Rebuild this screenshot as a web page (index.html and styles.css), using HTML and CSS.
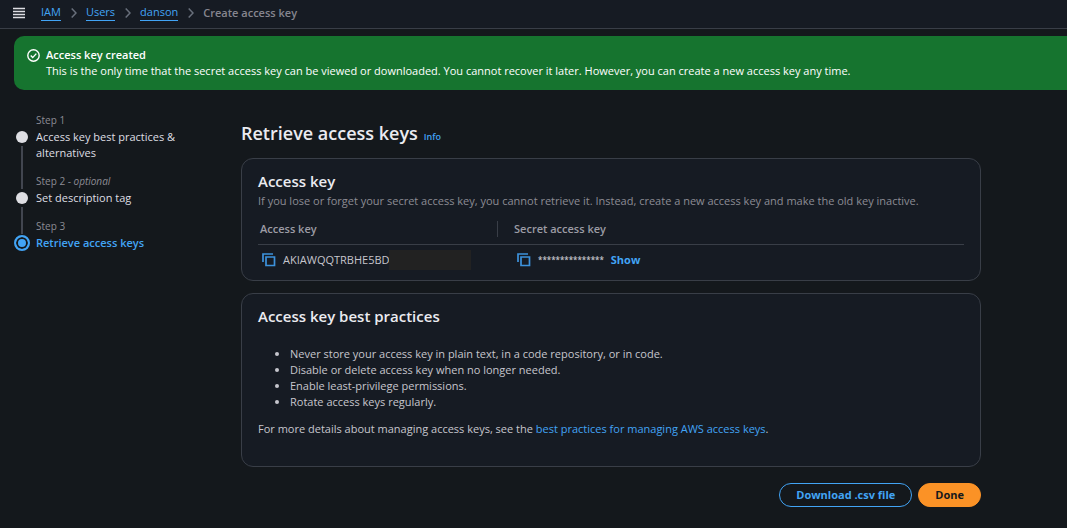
FILE: index.html
```html
<!DOCTYPE html>
<html lang="en">
<head>
<meta charset="utf-8">
<meta name="viewport" content="width=device-width, initial-scale=1">
<title>Create access key</title>
<link rel="stylesheet" href="styles.css">
</head>
<body>
<header class="topbar">
  <button class="icon-button menu" type="button" aria-label="Open navigation">
    <svg width="12" height="12" viewBox="0 0 12 12"><path d="M0 1.500h12M0 4.500h12M0 7.500h12M0 10.500h12" stroke="currentColor" stroke-width="1.300"/></svg>
  </button>
  <nav aria-label="Breadcrumbs">
    <ol class="crumbs">
      <li><a href="#">IAM</a><svg class="chevron" width="6" height="10" viewBox="0 0 6 10"><path d="M.7.5 5 5 .7 9.500"/></svg></li>
      <li><a href="#">Users</a><svg class="chevron" width="6" height="10" viewBox="0 0 6 10"><path d="M.7.5 5 5 .7 9.500"/></svg></li>
      <li><a href="#">danson</a><svg class="chevron" width="6" height="10" viewBox="0 0 6 10"><path d="M.7.5 5 5 .7 9.500"/></svg></li>
      <li class="current" aria-current="page">Create access key</li>
    </ol>
  </nav>
</header>

<section class="flash" role="status">
  <svg width="13" height="13" viewBox="0 0 13 13" fill="none" stroke="currentColor" stroke-width="1.4"><circle cx="6.500" cy="6.500" r="5.700"/><path d="m3.700 6.600 2 2 3.600-4"/></svg>
  <div>
    <strong>Access key created</strong>
    <p>This is the only time that the secret access key can be viewed or downloaded. You cannot recover it later. However, you can create a new access key any time.</p>
  </div>
</section>

<div class="layout">
  <nav aria-label="Steps">
    <ol class="steps">
      <li class="step">
        <span class="step-label">Step 1</span>
        <span class="rail"><span class="dot"></span></span>
        <a class="step-name" href="#">Access key best practices &amp; alternatives</a>
      </li>
      <li class="step">
        <span class="step-label">Step 2 - <em>optional</em></span>
        <span class="rail"><span class="dot"></span></span>
        <a class="step-name" href="#">Set description tag</a>
      </li>
      <li class="step active" aria-current="step">
        <span class="step-label">Step 3</span>
        <span class="rail"><span class="dot"></span></span>
        <span class="step-name">Retrieve access keys</span>
      </li>
    </ol>
  </nav>

  <main class="content">
    <div class="title">
      <h1>Retrieve access keys</h1>
      <a class="info" href="#">Info</a>
    </div>

    <section class="card">
      <h2>Access key</h2>
      <p class="description">If you lose or forget your secret access key, you cannot retrieve it. Instead, create a new access key and make the old key inactive.</p>
      <table class="keys">
        <thead>
          <tr><th scope="col"><span>Access key</span></th><th scope="col"><span>Secret access key</span></th></tr>
        </thead>
        <tbody>
          <tr>
            <td>
              <div class="value">
                <button class="icon-button" type="button" aria-label="Copy access key"><svg class="copy" width="14" height="14" viewBox="0 0 14 14"><path d="M1 9V1h10"/><path d="M4 4h8.500v8.500H4z"/></svg></button>
                <span>AKIAWQQTRBHE5BD</span><span class="mask"></span>
              </div>
            </td>
            <td>
              <div class="value">
                <button class="icon-button" type="button" aria-label="Copy secret access key"><svg class="copy" width="14" height="14" viewBox="0 0 14 14"><path d="M1 9V1h10"/><path d="M4 4h8.500v8.500H4z"/></svg></button>
                <span class="stars">***************</span>
                <button class="show" type="button">Show</button>
              </div>
            </td>
          </tr>
        </tbody>
      </table>
    </section>

    <section class="card practices">
      <h2>Access key best practices</h2>
      <ul>
        <li>Never store your access key in plain text, in a code repository, or in code.</li>
        <li>Disable or delete access key when no longer needed.</li>
        <li>Enable least-privilege permissions.</li>
        <li>Rotate access keys regularly.</li>
      </ul>
      <p>For more details about managing access keys, see the <a href="#">best practices for managing AWS access keys</a>.</p>
    </section>

    <div class="actions">
      <button class="button" type="button">Download .csv file</button>
      <button class="button primary" type="button">Done</button>
    </div>
  </main>
</div>
</body>
</html>
```
FILE: styles.css
```css
* { box-sizing: border-box; }

body {
  margin: 0;
  background: #14181c;
  color: #c6c6cd;
  font: 500 11px/16px "Open Sans", "Noto Sans", sans-serif;
}

h1, h2, p, ol, ul { margin: 0; padding: 0; }
ol { list-style: none; }
a { color: #42a4f5; text-decoration: none; }
button { font: inherit; cursor: pointer; }
svg { display: block; flex: none; }

.icon-button {
  padding: 0;
  border: 0;
  background: none;
  color: inherit;
}

.topbar {
  display: flex;
  align-items: flex-start;
  gap: 16px;
  height: 29px;
  padding: 4px 13px;
  background: #161b23;
  border-bottom: 1px solid #393e47;
}
.menu { padding-top: 3px; color: #dedee3; }
.crumbs { display: flex; }
.crumbs li { display: flex; align-items: center; }
.crumbs a { border-bottom: 1px solid #42a4f5; }
.crumbs .current { color: #86868f; font-weight: 600; }
.chevron {
  margin: 0 9px 0 10px;
  fill: none;
  stroke: #686f7b;
  stroke-width: 1.5;
}

.flash {
  display: flex;
  gap: 6px;
  margin: 7px 0 0 14px;
  padding: 11px 13px;
  border-radius: 10px 0 0 10px;
  background: #16742f;
  color: #fff;
}
.flash strong { display: block; font-weight: 600; }
.flash svg { margin-top: 2px; }

.layout {
  display: grid;
  grid-template-columns: 166px minmax(0, 1fr);
  gap: 61px;
  padding: 22px 86px 21px 14px;
}

.step {
  display: grid;
  grid-template-columns: 16px 1fr;
  gap: 1px 6px;
  padding-bottom: 12px;
}
.step-label { grid-column: 2; color: #8c8c94; font-size: 10px; }
.rail {
  grid-column: 1;
  display: flex;
  justify-content: center;
  align-items: flex-start;
  padding-top: 2px;
  margin-bottom: -28px;
  background: linear-gradient(#424650, #424650) center 17px / 2px 100% no-repeat;
}
.dot { width: 12px; height: 12px; border-radius: 50%; background: #dedee3; }
.step-name { color: #dedee3; }
.active .rail { margin: 0; padding: 0; background: none; }
.active .dot {
  width: 16px;
  height: 16px;
  border: 2px solid #42a4f5;
  background: #42a4f5;
  box-shadow: inset 0 0 0 2px #14181c;
}
.active .step-name { color: #42a4f5; font-weight: 600; }

.title { display: flex; align-items: baseline; gap: 6px; margin-bottom: 13px; }
h1 { color: #ebebf0; font-size: 18px; line-height: 24px; font-weight: 600; padding-top: 9px; }
.info { font-size: 9px; font-weight: 600; }

.card {
  margin-bottom: 12px;
  padding: 11px 16px 9px;
  border: 1px solid #393e47;
  border-radius: 12px;
  background: #161b23;
}
h2 { margin-bottom: 1px; color: #ebebf0; font-size: 15px; line-height: 22px; font-weight: 600; }
.description { color: #8c8c94; }

.keys { width: 100%; margin-top: 12px; border-collapse: collapse; table-layout: fixed; }
.keys th {
  padding: 0 0 7px;
  border-bottom: 1px solid #393e47;
  color: #9c9ca5;
  text-align: left;
  font-weight: 600;
}
.keys th:first-child { width: 34%; }
.keys th span { display: block; padding-left: 2px; }
.keys th:first-child span { border-right: 1px solid #393e47; }
.keys th + th span, .keys td + td { padding-left: 16px; }
.keys td { padding: 4px 0 0; }
.value { display: flex; align-items: center; gap: 7px; min-height: 22px; padding-left: 4px; }
.keys td + td .value { padding-left: 3px; }
.copy { fill: none; stroke: #3d92dc; stroke-width: 1.7; }
.mask { width: 82px; height: 20px; margin-left: -8px; background: #222; }
.stars { font-size: 8px; font-weight: 600; }
.show { padding: 0; border: 0; background: none; color: #42a4f5; font-weight: 700; }

.practices { min-height: 174px; padding-bottom: 27px; margin-bottom: 16px; }
.practices ul { margin: 19px 0 11px; padding-left: 32px; }

.actions { display: flex; justify-content: flex-end; gap: 6px; }
.button {
  height: 24px;
  padding: 0 16px;
  border: 1px solid #42a4f5;
  border-radius: 12px;
  background: #14181c;
  color: #42a4f5;
  line-height: 16px;
  font-weight: 700;
}
.primary { border-color: #fb9226; background: #fb9226; color: #14181c; }
```
